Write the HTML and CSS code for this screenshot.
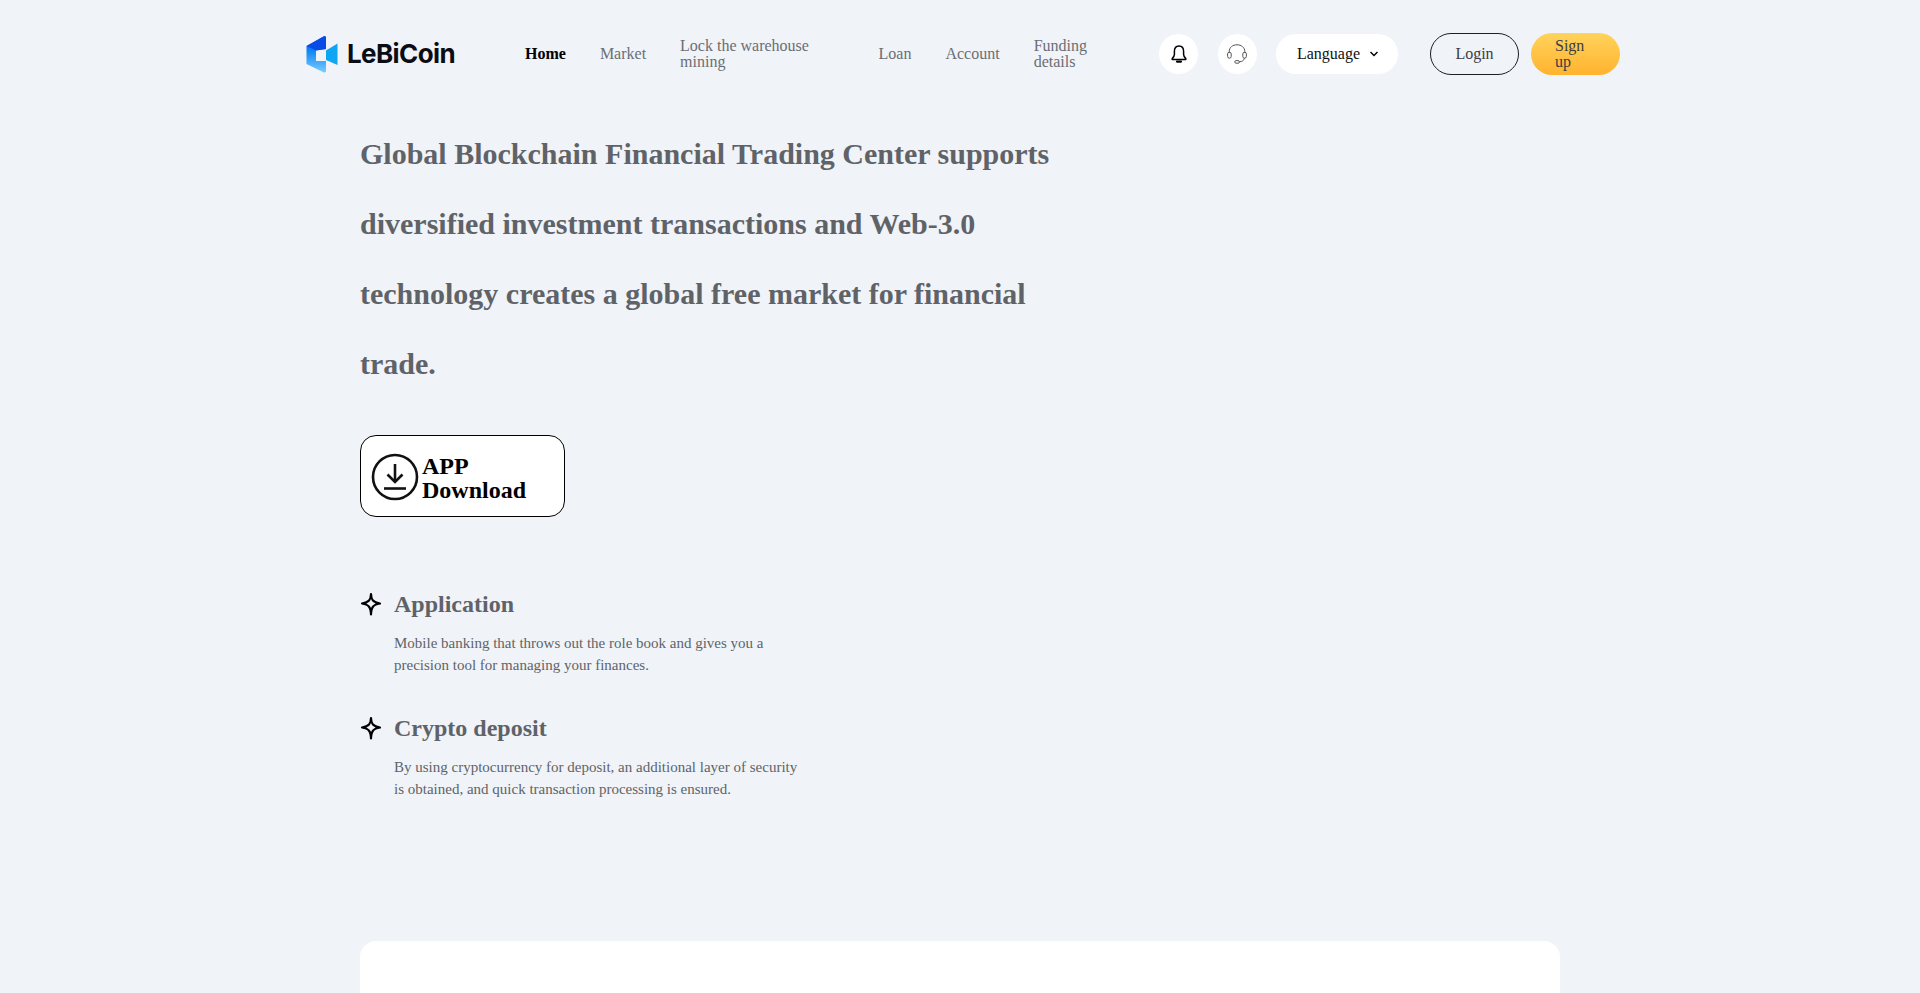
FILE: index.html
```html
<!doctype html>
<html>
<head>
<meta charset="utf-8">
<title>LeBiCoin</title>
<link rel="stylesheet" href="styles.css">
</head>

<body>
<div class="header">
	<a class="logo" href="#">
		<svg class="logo-mark" width="32" height="37" viewBox="0 0 32 37">
			<defs>
				<linearGradient id="logoLeft" x1="0" y1="0" x2="0" y2="1">
					<stop offset="0" stop-color="#0a4df0"/>
					<stop offset="0.42" stop-color="#1288f5"/>
					<stop offset="1" stop-color="#79cdfd"/>
				</linearGradient>
			</defs>
			<path d="M17.5 0.5 L0.5 10 V28 L18 36.5 C19 36.8 20 36 20 35 V25 H10 V14.5 L20 13 V1.5 C20 0.6 18.6 0 17.5 0.5 Z" fill="url(#logoLeft)"/>
			<path d="M20 13 L10 14.5 L0.5 10 L17.5 0.5 C18.6 0 20 0.6 20 1.5 Z" fill="#0a4be8"/>
			<path d="M20 14.5 L31.5 7.5 V29 L20 24 Z" fill="#0ea5f3"/>
		</svg>
		<span class="logo-text">LeBiCoin</span>
	</a>
	<ul class="nav">
		<li class="nav-item active">Home</li>
		<li class="nav-item">Market</li>
		<li class="nav-item nav-lock">Lock the warehouse mining</li>
		<li class="nav-item">Loan</li>
		<li class="nav-item">Account</li>
		<li class="nav-item nav-funding">Funding details</li>
	</ul>
	<div class="tools">
		<a class="round-btn" href="#">
			<svg width="18" height="20" viewBox="0 0 18 20" fill="none" stroke="#000" stroke-width="1.5" stroke-linejoin="round">
				<path d="M9 2 C5.6 2 4.4 4.6 4.4 7.4 V10.6 C4.4 12.4 3.4 13.4 2.2 14.6 V15.6 H15.8 V14.6 C14.6 13.4 13.6 12.4 13.6 10.6 V7.4 C13.6 4.6 12.4 2 9 2 Z"/>
				<path d="M7 17.6 H11" stroke-width="2.2" stroke-linecap="round"/>
			</svg>
		</a>
		<a class="round-btn" href="#">
			<svg width="22" height="22" viewBox="0 0 22 22" fill="none" stroke="#555" stroke-width="1">
				<path d="M3.2 10 V8.6 C3.2 4.4 6.6 1.8 11 1.8 C15.4 1.8 18.8 4.4 18.8 8.6 V10"/>
				<rect x="1.6" y="9.2" width="3.6" height="6" rx="1.8"/>
				<rect x="16.8" y="9.2" width="3.6" height="6" rx="1.8"/>
				<path d="M18.4 15.2 C18 17.6 16 18.6 13.4 18.8"/>
				<rect x="8.8" y="17.6" width="4.6" height="2.6" rx="1.3"/>
			</svg>
		</a>
		<a class="lang-btn" href="#">
			<span>Language</span>
			<svg width="10" height="6" viewBox="0 0 10 6" fill="none" stroke="#000" stroke-width="1.4"><path d="M1.5 1 L5 4.6 L8.5 1"/></svg>
		</a>
		<a class="login-btn" href="#">Login</a>
		<a class="signup-btn" href="#"><span>Sign up</span></a>
	</div>
</div>

<div class="main">
	<div class="hero">
		<h1 class="hero-title">Global Blockchain Financial Trading Center supports diversified investment transactions and Web-3.0 technology creates a global free market for financial trade.</h1>
		<a class="download-btn" href="#">
			<svg width="48" height="48" viewBox="0 0 48 48" fill="none" stroke="#111" stroke-width="2.6">
				<circle cx="24" cy="24" r="22"/>
				<path d="M24 11 V27.5"/>
				<path d="M16.5 21.5 L24 29 L31.5 21.5"/>
				<path d="M13 35.5 H35"/>
			</svg>
			<span>APP Download</span>
		</a>
		<div class="feature">
			<h3 class="feature-title">
				<svg class="feature-icon" width="22" height="24" viewBox="0 0 22 24" fill="none" stroke="#000" stroke-width="2.2" stroke-linejoin="round"><path d="M11 2 C11.2 8 13 10.4 20 11.5 C13 12.6 11.2 15.4 11 22.5 C10.8 15.4 9 12.6 2 11.5 C9 10.4 10.8 8 11 2 Z"/></svg>
				Application
			</h3>
			<p class="feature-desc">Mobile banking that throws out the role book and gives you a precision tool for managing your finances.</p>
		</div>
		<div class="feature">
			<h3 class="feature-title">
				<svg class="feature-icon" width="22" height="24" viewBox="0 0 22 24" fill="none" stroke="#000" stroke-width="2.2" stroke-linejoin="round"><path d="M11 2 C11.2 8 13 10.4 20 11.5 C13 12.6 11.2 15.4 11 22.5 C10.8 15.4 9 12.6 2 11.5 C9 10.4 10.8 8 11 2 Z"/></svg>
				Crypto deposit
			</h3>
			<p class="feature-desc">By using cryptocurrency for deposit, an additional layer of security is obtained, and quick transaction processing is ensured.</p>
		</div>
	</div>
	<div class="panel"></div>
</div>
</body>
</html>
```

FILE: styles.css
```css
body { margin: 0; height: 993px; overflow: hidden; font-family: "Liberation Serif", serif; background-color: #f0f3f8; color: #5f6368; }
a { color: inherit; text-decoration: none; }

.header { display: flex; align-items: center; width: 1314px; height: 108px; margin-left: 306px; }
.logo { display: flex; align-items: center; gap: 9px; width: 149px; margin-right: 70px; }
.logo-mark { flex: none; }
.logo-text { font: 700 26px/1 Inter, sans-serif; letter-spacing: -0.6px; color: #0b0d12; }
.nav { display: flex; align-items: center; gap: 34px; margin: 0; padding: 0; list-style-type: none; font-size: 16px; line-height: 16px; color: #6a6e74; }
.nav-item { flex: none; }
.nav-item.active { font-weight: 700; color: #000; }
.nav-lock { width: 164.5px; }
.nav-funding { width: 66px; }

.tools { display: flex; align-items: center; margin-left: auto; }
.round-btn { display: flex; align-items: center; justify-content: center; width: 39px; height: 40px; margin-right: 19.5px; border-radius: 50%; background-color: #fff; }
.lang-btn { display: flex; align-items: center; justify-content: center; gap: 9px; width: 122px; height: 40px; margin-right: 32px; padding-left: 2px; box-sizing: border-box; border-radius: 20px; background-color: #fff; font-size: 16px; color: #111; }
.login-btn { box-sizing: border-box; display: flex; align-items: center; justify-content: center; width: 89px; height: 42px; margin-right: 12px; border: 1px solid #1c1f24; border-radius: 21px; font-size: 16px; color: #3a3d42; }
.signup-btn { box-sizing: border-box; display: flex; align-items: center; width: 89px; height: 42px; padding-left: 24px; border-radius: 21px; background: linear-gradient(180deg, #ffd35c, #ffb32e); font-size: 16px; line-height: 16px; color: #3a3d42; }
.signup-btn span { width: 40px; }

.main { width: 1200px; margin-left: 360px; }
.hero { box-sizing: border-box; height: 833px; padding-top: 11px; }
.hero-title { width: 700px; margin: 0 0 36px; font-size: 30px; line-height: 70px; font-weight: 700; color: #5f6368; }
.download-btn { box-sizing: border-box; display: flex; align-items: center; gap: 3px; width: 205px; height: 82px; padding: 2px 0 0 10px; border: 1px solid #000; border-radius: 16px; background-color: #fff; font-size: 24px; line-height: 24px; font-weight: 700; color: #000; }
.download-btn svg { flex: none; }
.download-btn span { padding-top: 2px; }
.feature { width: 440px; margin-top: 35px; }
.download-btn + .feature { margin-top: 70px; }
.feature-title { display: flex; align-items: center; gap: 12px; margin: 0 0 11px; font-size: 24px; line-height: 34px; font-weight: 700; color: #5f6368; }
.feature-icon { flex: none; }
.feature-desc { margin: 0 0 0 34px; font-size: 15px; line-height: 22px; color: #5f6368; }
.panel { height: 400px; border-radius: 16px; background-color: #fff; }
```
